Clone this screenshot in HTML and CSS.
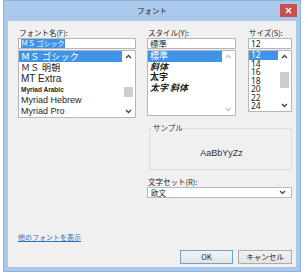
FILE: index.html
```html
<!DOCTYPE html>
<html lang="ja">
<head>
<meta charset="utf-8">
<title>フォント</title>
<link rel="stylesheet" href="styles.css">
</head>
<body>
<div class="window">
  <div class="titlebar">
    <span class="title">フォント</span>
    <div class="close"><svg width="7" height="7" viewBox="0 0 7 7"><path d="M1 1L6 6M6 1L1 6" stroke="#fff" stroke-width="1.4"/></svg></div>
  </div>
  <div class="client">
    <div class="toprow">
      <div class="col col-font">
        <div class="lbl">フォント名(F):</div>
        <div class="edit edit-font"><span class="hl">ＭＳ ゴシック</span></div>
        <div class="list list-font">
          <ul class="items items-font">
            <li class="sel f-gothic">ＭＳ ゴシック</li>
            <li class="f-mincho">ＭＳ 明朝</li>
            <li class="f-mt">MT Extra</li>
            <li class="f-arabic">Myriad Arabic</li>
            <li class="f-myriad">Myriad Hebrew</li>
            <li class="f-myriad">Myriad Pro</li>
          </ul>
          <div class="vscroll">
            <div class="arrow"><svg width="7" height="5" viewBox="0 0 7 5"><path d="M1 4L3.5 1.5L6 4" fill="none" stroke="#404040" stroke-width="1.3"/></svg></div>
            <div class="track track-font"><div class="thumb thumb-font"></div></div>
            <div class="arrow"><svg width="7" height="5" viewBox="0 0 7 5"><path d="M1 1L3.5 3.5L6 1" fill="none" stroke="#404040" stroke-width="1.3"/></svg></div>
          </div>
        </div>
      </div>
      <div class="col col-style">
        <div class="lbl">スタイル(Y):</div>
        <div class="edit edit-style">標準</div>
        <div class="list list-style">
          <ul class="items items-style">
            <li class="sel">標準</li>
            <li class="s-italic">斜体</li>
            <li class="s-bold">太字</li>
            <li class="s-bolditalic">太字 斜体</li>
          </ul>
          <div class="vscroll">
            <div class="arrow"><svg width="7" height="5" viewBox="0 0 7 5"><path d="M1 4L3.5 1.5L6 4" fill="none" stroke="#c4c4c4" stroke-width="1.3"/></svg></div>
            <div class="track"></div>
            <div class="arrow"><svg width="7" height="5" viewBox="0 0 7 5"><path d="M1 1L3.5 3.5L6 1" fill="none" stroke="#c4c4c4" stroke-width="1.3"/></svg></div>
          </div>
        </div>
      </div>
      <div class="col col-size">
        <div class="lbl">サイズ(S):</div>
        <div class="edit edit-size">12</div>
        <div class="list list-size">
          <ul class="items items-size">
            <li class="sel">12</li>
            <li>14</li>
            <li>16</li>
            <li>18</li>
            <li>20</li>
            <li>22</li>
            <li>24</li>
          </ul>
          <div class="vscroll">
            <div class="arrow"><svg width="7" height="5" viewBox="0 0 7 5"><path d="M1 4L3.5 1.5L6 4" fill="none" stroke="#404040" stroke-width="1.3"/></svg></div>
            <div class="track track-size"><div class="thumb thumb-size"></div></div>
            <div class="arrow"><svg width="7" height="5" viewBox="0 0 7 5"><path d="M1 1L3.5 3.5L6 1" fill="none" stroke="#404040" stroke-width="1.3"/></svg></div>
          </div>
        </div>
      </div>
    </div>
    <div class="lower">
      <fieldset class="sample">
        <legend>サンプル</legend>
        <div class="preview">AaBbYyZz</div>
      </fieldset>
      <div class="lbl lbl-charset">文字セット(R):</div>
      <div class="combo">
        <span>欧文</span>
        <svg width="7" height="5" viewBox="0 0 7 5"><path d="M1 1L3.5 3.5L6 1" fill="none" stroke="#404040" stroke-width="1.2"/></svg>
      </div>
    </div>
    <a class="more" href="#">他のフォントを表示</a>
    <div class="buttons">
      <button class="btn btn-default" type="button">OK</button>
      <button class="btn" type="button">キャンセル</button>
    </div>
  </div>
</div>
</body>
</html>
```

FILE: styles.css
```css
* {
  box-sizing: border-box;
}

body {
  margin: 0;
  background: #ffffff;
  font-family: "Noto Sans CJK JP", "Noto Sans", sans-serif;
  font-size: 7.5px;
  color: #1e1e1e;
}

.window {
  margin-left: 3px;
  width: 298px;
  height: 272px;
  background: #aac8ea;
  border: 1px solid #8fb1d8;
  padding: 0 4px 4px 4px;
  display: flex;
  flex-direction: column;
}

.titlebar {
  height: 20px;
  position: relative;
  display: flex;
  justify-content: center;
  align-items: center;
}

.title {
  font-size: 7.5px;
  color: #2a2a2a;
  line-height: 10px;
}

.close {
  position: absolute;
  right: -1px;
  top: 3px;
  width: 17px;
  height: 13px;
  background: #c9514d;
  display: flex;
  align-items: center;
  justify-content: center;
}

.client {
  flex: 1;
  background: #f0f0f0;
  padding: 6px 4px 0 10px;
  display: flex;
  flex-direction: column;
}

.toprow {
  display: flex;
  height: 91px;
  align-items: flex-start;
}

.col {
  display: flex;
  flex-direction: column;
}

.col-font {
  width: 118px;
}

.col-style {
  width: 89px;
  margin-left: 11px;
}

.col-size {
  width: 44px;
  margin-left: 12px;
}

.lbl {
  height: 11px;
  line-height: 11px;
  white-space: nowrap;
  padding-left: 1px;
}

.edit {
  height: 11px;
  background: #ffffff;
  border: 1px solid #b5b7bd;
  line-height: 9px;
  padding-left: 2px;
  white-space: nowrap;
  overflow: hidden;
}

.edit-font {
  font-size: 7px;
}

.hl {
  background: #3f94e8;
  color: #ffffff;
  display: inline-block;
  height: 9px;
}

.edit-style {
  font-size: 8.5px;
}

.edit-size {
  font-family: "Noto Sans", sans-serif;
  font-size: 8.5px;
}

.list {
  margin-top: 1px;
  border: 1px solid #b5b7bd;
  background: #ffffff;
  display: flex;
}

.list-font {
  height: 68px;
}

.list-style {
  height: 66px;
}

.list-size {
  height: 62px;
}

.items {
  flex: 1;
  list-style: none;
  margin: 0;
  padding: 0;
  overflow: hidden;
  min-width: 0;
}

.items li {
  white-space: nowrap;
  padding-left: 2px;
}

.items li.sel {
  background: #3f94e8;
  color: #ffffff;
}

.items-font li {
  height: 11px;
  line-height: 11px;
}

.f-gothic,
.f-mincho {
  font-size: 9px;
  letter-spacing: 0.3px;
}

.f-mt {
  font-family: "Liberation Sans", sans-serif;
  font-size: 10px;
}

.f-arabic {
  font-family: "Liberation Sans", sans-serif;
  font-size: 6.5px;
  font-weight: bold;
}

.f-myriad {
  font-family: "Liberation Sans", sans-serif;
  font-size: 9px;
}

.items-style li {
  height: 10.5px;
  line-height: 10.5px;
  font-size: 9px;
}

.s-italic {
  font-style: italic;
  font-weight: bold;
}

.s-bold {
  font-weight: bold;
}

.s-bolditalic {
  font-weight: bold;
  font-style: italic;
}

.items-size li {
  height: 8.5px;
  line-height: 8.5px;
  font-family: "Noto Sans", sans-serif;
  font-size: 8.5px;
}

.vscroll {
  width: 13px;
  display: flex;
  flex-direction: column;
  background: #ffffff;
}

.arrow {
  height: 11px;
  display: flex;
  align-items: center;
  justify-content: center;
}

.track {
  flex: 1;
  display: flex;
  flex-direction: column;
  align-items: center;
}

.thumb {
  width: 9px;
  background: #cdcdcd;
}

.track-font {
  padding-top: 25px;
}

.thumb-font {
  height: 10px;
}

.track-size {
  padding-top: 10px;
}

.thumb-size {
  height: 16px;
}

.lower {
  margin-left: 129px;
  display: flex;
  flex-direction: column;
}

.sample {
  margin: 5px 0 0 2px;
  width: 143px;
  border: 1px solid #dcdcdc;
  padding: 0 0 0 2px;
  min-width: 0;
}

.sample legend {
  padding: 0 1px;
  line-height: 10px;
  height: 10px;
  color: #333333;
}

.preview {
  height: 36px;
  padding-top: 15px;
  text-align: center;
  font-family: "Liberation Sans", sans-serif;
  font-size: 9px;
  line-height: 10px;
  color: #333333;
}

.lbl-charset {
  margin-top: 6px;
}

.combo {
  width: 145px;
  height: 11px;
  background: #ffffff;
  border: 1px solid #b5b7bd;
  display: flex;
  align-items: center;
  justify-content: space-between;
  padding: 0 5px 0 3px;
  font-size: 7.5px;
}

.more {
  margin-top: 34px;
  line-height: 10px;
  height: 10px;
  color: #2d6fc0;
  text-decoration: underline;
  align-self: flex-start;
  font-size: 7px;
}

.buttons {
  margin-top: 8px;
  display: flex;
  justify-content: flex-end;
  gap: 5px;
}

.btn {
  height: 14px;
  width: 54px;
  padding: 0;
  margin: 0;
  font-family: "Noto Sans CJK JP", "Noto Sans", sans-serif;
  font-size: 7.5px;
  line-height: 12px;
  color: #1e1e1e;
  background: linear-gradient(#f2f2f2, #e3e3e3);
  border: 1px solid #adadad;
}

.btn-default {
  width: 53px;
  border-color: #6aa6dc;
}
```
